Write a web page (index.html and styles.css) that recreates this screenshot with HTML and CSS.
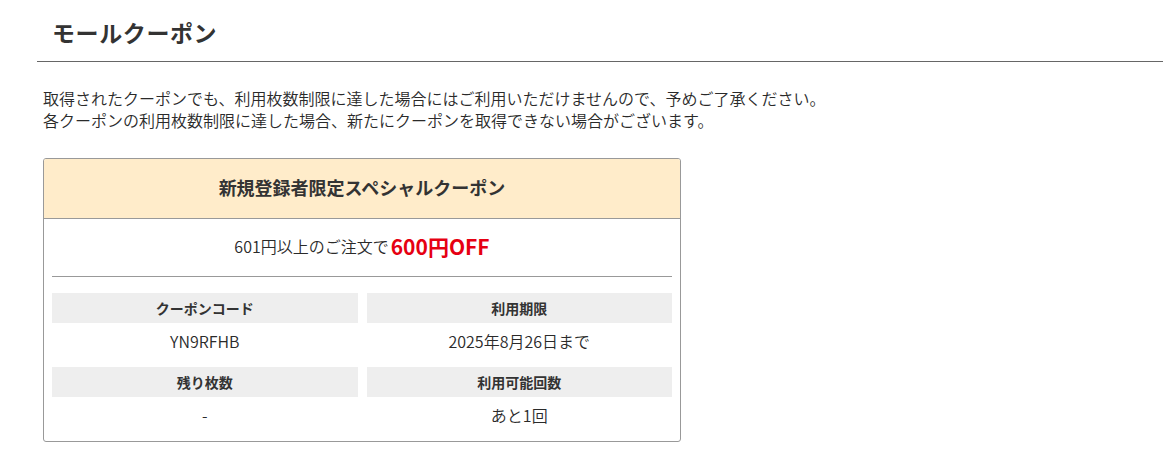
FILE: index.html
```html
<!DOCTYPE html>
<html lang="ja">
<head>
<meta charset="utf-8">
<title>モールクーポン</title>
<link rel="stylesheet" href="styles.css">
</head>
<body>
<div class="page">
  <h1 class="title">モールクーポン</h1>
  <div class="content">
    <p class="notice">取得されたクーポンでも、利用枚数制限に達した場合にはご利用いただけませんので、予めご了承ください。<br>各クーポンの利用枚数制限に達した場合、新たにクーポンを取得できない場合がございます。</p>
    <div class="card">
      <div class="card-head">新規登録者限定スペシャルクーポン</div>
      <div class="card-body">
        <div class="cond">601円以上のご注文で<span class="off">600円OFF</span></div>
        <div class="grid">
          <div class="label">クーポンコード</div>
          <div class="label">利用期限</div>
          <div class="value">YN9RFHB</div>
          <div class="value">2025年8月26日まで</div>
          <div class="label">残り枚数</div>
          <div class="label">利用可能回数</div>
          <div class="value">-</div>
          <div class="value">あと1回</div>
        </div>
      </div>
    </div>
  </div>
</div>
</body>
</html>
```
FILE: styles.css
```css
html, body {
  margin: 0;
  padding: 0;
  background: #fff;
}
body {
  font-family: "Noto Sans CJK JP", "Noto Sans", sans-serif;
  color: #333;
}
.page {
  padding-left: 37px;
}
.title {
  margin: 0;
  padding: 15px 0 12px 15px;
  font-size: 23px;
  line-height: 34px;
  font-weight: 700;
  color: #333;
  border-bottom: 1px solid #666;
  letter-spacing: 0.6px;
}
.content {
  padding-left: 6px;
}
.notice {
  margin: 25px 0 27px;
  font-size: 16px;
  line-height: 22px;
  font-weight: 350;
  color: #2a2a2a;
}
.card {
  width: 636px;
  border: 1px solid #999;
  border-radius: 3px;
  overflow: hidden;
}
.card-head {
  height: 55px;
  padding-bottom: 4px;
  display: flex;
  align-items: center;
  justify-content: center;
  background: #ffecca;
  border-bottom: 1px solid #999;
  font-size: 18px;
  font-weight: 700;
}
.card-body {
  padding: 0 8px;
}
.cond {
  height: 53px;
  padding-bottom: 4px;
  display: flex;
  align-items: center;
  justify-content: center;
  border-bottom: 1px solid #999;
  font-size: 16px;
  font-weight: 350;
  color: #2a2a2a;
}
.off {
  color: #e60012;
  font-size: 21px;
  font-weight: 700;
  margin-left: 2px;
}
.grid {
  display: grid;
  grid-template-columns: 1fr 1fr;
  column-gap: 9px;
  margin-top: 16px;
}
.label {
  height: 30px;
  display: flex;
  align-items: center;
  justify-content: center;
  background: #eee;
  font-size: 14px;
  font-weight: 700;
}
.value {
  height: 36px;
  padding-bottom: 8px;
  display: flex;
  align-items: center;
  justify-content: center;
  font-size: 16px;
  font-weight: 350;
  color: #2a2a2a;
}
```
